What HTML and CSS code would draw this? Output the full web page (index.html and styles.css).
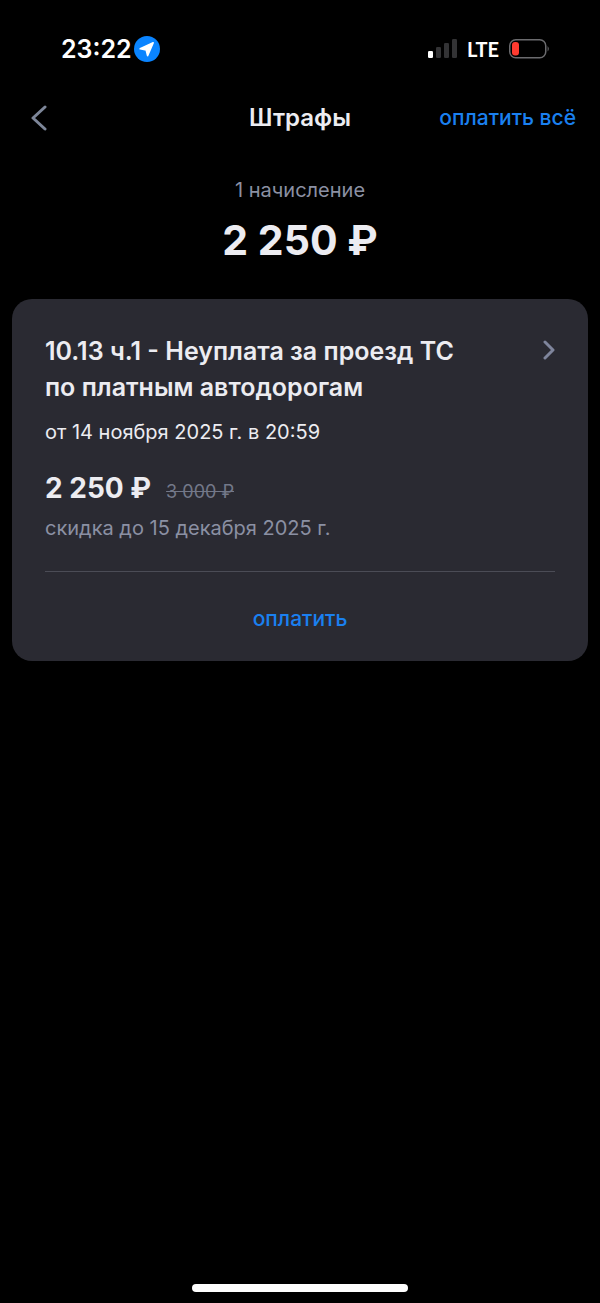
FILE: index.html
```
<!DOCTYPE html>
<html lang="ru">
<head>
    <meta charset="UTF-8">
    <title>Штрафы</title>
    <meta name="viewport" content="width=device-width, initial-scale=1.0">
    <link rel="stylesheet" href="styles.css">
</head>
<body>
    <div class="status-bar">
        <div class="status-left">
            <span class="time">23:22</span>
            <svg class="location" width="26" height="26" viewBox="0 0 26 26" aria-hidden="true">
                <circle cx="13" cy="13" r="13" fill="#0a84ff"/>
                <path d="M19.2 6.8 L13.6 19.6 L12.2 14 L6.2 12.8 Z" fill="#fff" stroke="#fff" stroke-width="1.6" stroke-linejoin="round"/>
            </svg>
        </div>
        <div class="status-right">
            <svg width="29" height="20" viewBox="0 0 29 20" aria-hidden="true">
                <rect x="0" y="12" width="5" height="7" rx="1.2" fill="#fff"/>
                <rect x="8" y="8" width="5" height="11" rx="1.2" fill="#333335"/>
                <rect x="16" y="4" width="5" height="15" rx="1.2" fill="#333335"/>
                <rect x="24" y="0" width="5" height="19" rx="1.2" fill="#333335"/>
            </svg>
            <span class="network">LTE</span>
            <svg width="41" height="20" viewBox="0 0 41 20" aria-hidden="true">
                <rect x="0.75" y="0.75" width="36" height="18" rx="6" fill="none" stroke="#6b6b6e" stroke-width="1.5"/>
                <rect x="3" y="3" width="7" height="13.5" rx="3" fill="#ff3b30"/>
                <path d="M38.6 7 Q41 9.8 38.6 12.6 Z" fill="#6b6b6e"/>
            </svg>
        </div>
    </div>

    <header class="header">
        <button class="back" aria-label="Назад">
            <svg width="16" height="26" viewBox="0 0 16 26" aria-hidden="true">
                <path d="M14 2 L2 13 L14 24" fill="none" stroke="#7d8699" stroke-width="3" stroke-linecap="round" stroke-linejoin="round"/>
            </svg>
        </button>
        <h1>Штрафы</h1>
        <button class="link-button pay-all">оплатить всё</button>
    </header>

    <main>
        <section class="total">
            <p class="total-count">1 начисление</p>
            <p class="total-sum">2 250 ₽</p>
        </section>

        <article class="card">
            <a href="#fine" class="card-info">
                <div class="card-head">
                    <h2>10.13 ч.1 - Неуплата за проезд ТС по платным автодорогам</h2>
                    <svg class="chevron" width="12" height="20" viewBox="0 0 12 20" aria-hidden="true">
                        <path d="M2 2 L10 10 L2 18" fill="none" stroke="#7f859c" stroke-width="3" stroke-linecap="round" stroke-linejoin="round"/>
                    </svg>
                </div>
                <p class="date">от 14 ноября 2025 г. в 20:59</p>
                <p class="price">
                    <strong>2 250 ₽</strong>
                    <s>3 000 ₽</s>
                </p>
                <p class="discount">скидка до 15 декабря 2025 г.</p>
            </a>
            <button class="link-button pay">оплатить</button>
        </article>
    </main>

    <div class="home-indicator"></div>
</body>
</html>
```

FILE: styles.css
```
:root {
    --background: #000;
    --surface: #2a2a32;
    --border: #4b4c56;
    --text: #ececf1;
    --text-secondary: #8b90a3;
    --text-muted: #737889;
    --accent: #1a80f0;
}

* {
    box-sizing: border-box;
}

body {
    display: flex;
    flex-direction: column;
    min-height: 100vh;
    margin: 0;
    background: var(--background);
    color: var(--text);
    font-family: Inter, "Liberation Sans", sans-serif;
    font-size: 20px;
    line-height: 24px;
}

h1, h2, p {
    margin: 0;
}

button {
    padding: 0;
    background: none;
    border: none;
    font-family: inherit;
    cursor: pointer;
}

svg {
    display: block;
    flex: none;
}

/* Status bar */
.status-bar {
    display: flex;
    justify-content: space-between;
    align-items: center;
    height: 98px;
    padding: 0 50px 0 61px;
    color: #fff;
}

.status-left,
.status-right {
    display: flex;
    align-items: center;
}

.status-left {
    gap: 2px;
}

.status-right {
    gap: 10px;
}

.time {
    font-size: 25px;
    font-weight: 600;
}

.network {
    font-family: Lato, "Liberation Sans", sans-serif;
    font-size: 20px;
    font-weight: 700;
}

/* Header */
.header {
    display: grid;
    grid-template-columns: 1fr auto 1fr;
    align-items: center;
    height: 40px;
    padding: 0 24px;
}

.back {
    justify-self: start;
    padding-left: 7px;
}

h1 {
    font-size: 24px;
    font-weight: 600;
}

.link-button {
    color: var(--accent);
    font-size: 21px;
    font-weight: 500;
    line-height: 24px;
}

.pay-all {
    justify-self: end;
}

/* Total */
.total {
    padding: 40px 0 35px;
    text-align: center;
}

.total-count {
    color: var(--text-secondary);
}

.total-sum {
    margin-top: 14px;
    font-size: 41px;
    font-weight: 700;
    line-height: 48px;
}

/* Fine card */
.card {
    margin: 0 12px;
    padding: 34px 33px 0;
    background: var(--surface);
    border-radius: 20px;
}

.card-info {
    display: block;
    padding-bottom: 31px;
    border-bottom: 1px solid var(--border);
    color: inherit;
    text-decoration: none;
}

.card-head {
    display: flex;
    justify-content: space-between;
    gap: 60px;
}

h2 {
    font-size: 25px;
    font-weight: 600;
    line-height: 36px;
}

.chevron {
    margin-top: 7px;
}

.date {
    margin-top: 15px;
}

.price {
    display: flex;
    align-items: baseline;
    gap: 15px;
    margin-top: 26px;
}

.price strong {
    font-size: 28px;
    font-weight: 700;
    line-height: 36px;
}

.price s {
    color: var(--text-muted);
    font-size: 18px;
}

.discount {
    margin-top: 10px;
    color: var(--text-secondary);
}

.pay {
    width: 100%;
    height: 89px;
    padding-top: 4px;
}

.home-indicator {
    width: 36%;
    height: 8px;
    margin: auto auto 11px;
    background: #fff;
    border-radius: 4px;
}
```
